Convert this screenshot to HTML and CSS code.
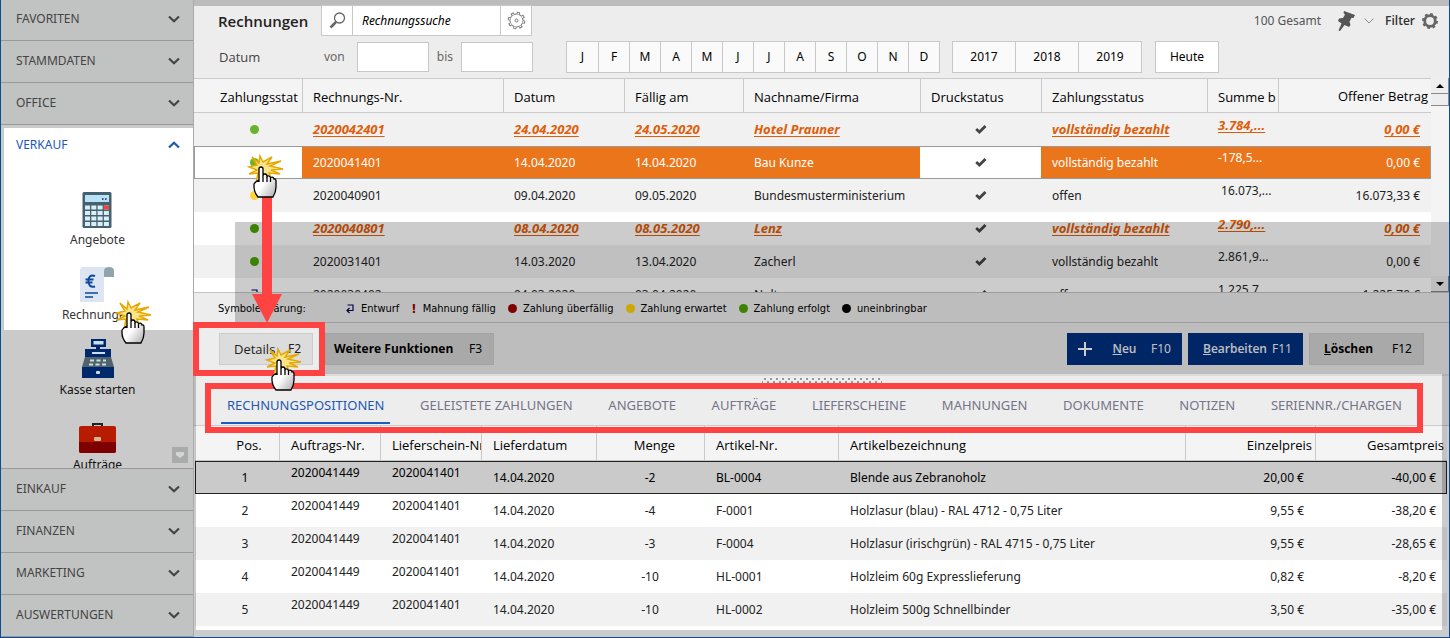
FILE: index.html
```html
<!DOCTYPE html>
<html lang="de">
<head>
<meta charset="utf-8">
<title>Rechnungen</title>
<link rel="stylesheet" href="styles.css">
</head>
<body>
<svg class="defs" width="0" height="0" aria-hidden="true">
  <defs>
    <linearGradient id="skin" x1="0" y1="0" x2="1" y2="1"><stop offset=".5" stop-color="#fff"/><stop offset="1" stop-color="#aaa"/></linearGradient>
    <symbol id="down" viewBox="0 0 12 8"><path d="M1 1.500l5 4.700 5-4.700" fill="none" stroke="currentColor" stroke-width="2.200"/></symbol>
    <symbol id="up" viewBox="0 0 12 8"><path d="M1 6.500l5-4.700 5 4.700" fill="none" stroke="currentColor" stroke-width="2.200"/></symbol>
    <symbol id="check" viewBox="0 0 12 10"><path d="M1.200 5l3.200 3L10.500 2" fill="none" stroke="currentColor" stroke-width="2.800"/></symbol>
    <symbol id="entwurf" viewBox="0 0 10 10"><path d="M2.500 1h5.500v5.500H2M4.500 4L2 6.500 4.500 9" fill="none" stroke="#000060" stroke-width="1.200"/></symbol>
    <symbol id="click" viewBox="0 0 60 60">
      <path d="M12 12l7 6 1-7 3 6 9-5-5 7 14-3-11 5 13 3-12 1 9 4-11-1 3 8-7-7-9 9 2-10-9 1 8-4-8-3 8-2z" fill="#fbe48a" stroke="#e5a900" stroke-width="1.500"/>
      <path d="M19 37V24q0-2 2-2t2 2v7q0-2 2-2t2 2.500q2-1.500 3.500 1 3-1 3.500 1.500 2-.5 2 2V42q0 5-3 10H18q-4-5-4-10v-3q2-3 5-4z" fill="url(#skin)" stroke="#000" stroke-width="1.300"/>
      <path d="M23 31v6M27 32v5M30.500 33v4" stroke="#000" stroke-width="1.300"/>
    </symbol>
  </defs>
</svg>
<nav class="sidebar">
  <button class="nav">FAVORITEN<svg><use href="#down"/></svg></button>
  <button class="nav">STAMMDATEN<svg><use href="#down"/></svg></button>
  <button class="nav">OFFICE<svg><use href="#down"/></svg></button>
  <section class="group">
    <div class="lit">
      <button class="nav open">VERKAUF<svg><use href="#up"/></svg></button>
      <a class="tile" href="#">
        <svg width="30" height="36" viewBox="0 0 30 36"><rect x=".5" width="29" height="36" rx="1.500" fill="#45606e"/><rect x="3" y="3" width="24" height="7" fill="#b9e2f6"/><path d="M20 7h1.500M23 7h1.500" stroke="#222" stroke-width="1.500"/><path d="M3 15.500h24M3 21h24M3 26.500h24M3 32h24" stroke="#d8effa" stroke-width="4" stroke-dasharray="5 1.300"/><rect x="22" y="13.500" width="5" height="4" fill="#f44336"/></svg>
        <span>Angebote</span></a>
      <a class="tile" href="#">
        <svg width="34" height="36" viewBox="0 0 34 36"><path d="M0 3q0-3 3-3h24q-3 1-3 5v30H0z" fill="#dde4f2"/><path d="M24 10V4q0-4 5-4t5 4v6z" fill="#90a4ae"/><path d="M15 9q-6.500-2-6.500 5t6.500 5.500M5.500 12.500h8M5.500 15.500h7" fill="none" stroke="#0a4a9c" stroke-width="2"/><path d="M5 26h13M5 30h8" stroke="#0a4a9c" stroke-width="1.600"/></svg>
        <span>Rechnungen</span></a>
    </div>
    <div class="dimmed">
      <a class="tile" href="#">
        <svg width="32" height="39" viewBox="0 0 32 39"><rect x="9" width="15" height="8" fill="#00286c"/><rect x="11.500" y="2" width="10" height="3.500" fill="#cde"/><path d="M14 8h4v3h-4z" fill="#00286c"/><path d="M3 10h26v8H3z" fill="#00286c"/><path d="M10 14h13" stroke="#cde" stroke-width="2"/><path d="M3 18h26l3 10H0z" fill="#50626b"/><path d="M8 21.500h16M7 25.500h18" stroke="#cdd" stroke-width="2.200" stroke-dasharray="4 2.500"/><rect y="28" width="32" height="11" fill="#00286c"/><rect x="14" y="32" width="4" height="3" rx="1" fill="#cdd"/></svg>
        <span>Kasse starten</span></a>
      <a class="tile" href="#">
        <svg width="37" height="30" viewBox="0 0 37 30"><path d="M14 4V1h9v3" fill="none" stroke="#222" stroke-width="2"/><rect y="3" width="37" height="27" rx="2" fill="#b71c00"/><path d="M0 19h37v9q0 2-2 2H2q-2 0-2-2z" fill="#7f0000"/><rect x="15" y="14" width="7" height="4" rx="1" fill="#cbb898"/></svg>
        <span>Aufträge</span></a>
    </div>
    <button class="more" aria-label="Mehr"><svg width="8" height="6" viewBox="0 0 8 6"><path d="M0 0h8v3L4 6 0 3z" fill="#d4d4d4"/></svg></button>
  </section>
  <button class="nav">EINKAUF<svg><use href="#down"/></svg></button>
  <button class="nav">FINANZEN<svg><use href="#down"/></svg></button>
  <button class="nav">MARKETING<svg><use href="#down"/></svg></button>
  <button class="nav">AUSWERTUNGEN<svg><use href="#down"/></svg></button>
</nav>
<main class="main">
  <header class="head">
    <h1>Rechnungen</h1>
    <div class="search">
      <button aria-label="Suchen"><svg width="17" height="17" viewBox="0 0 17 17" fill="none" stroke="#666"><circle cx="10.500" cy="6" r="5" stroke-width="1.300"/><path d="M7 10l-5.500 5.500" stroke-width="2.500"/></svg></button>
      <input type="text" value="Rechnungssuche" aria-label="Rechnungssuche">
      <button aria-label="Sucheinstellungen"><svg width="19" height="19" viewBox="0 0 19 19"><circle cx="9.500" cy="9.500" r="7" fill="#777"/><circle cx="9.500" cy="9.500" r="7.700" fill="none" stroke="#777" stroke-width="2.200" stroke-dasharray="3.200 2.850"/><circle cx="9.500" cy="9.500" r="7" fill="none" stroke="#fff" stroke-width="1.600" stroke-dasharray="1.500 3.998" stroke-dashoffset="-.750"/><circle cx="9.500" cy="9.500" r="6" fill="#fff"/><circle cx="9.500" cy="9.500" r="1.500" fill="none" stroke="#777"/></svg></button>
    </div>
    <div class="tools">
      <span class="total">100 Gesamt</span>
      <svg width="17" height="20" viewBox="0 0 17 20"><path d="M6 0l11 4-1.500 3-2-.3-2 4 1 3.300-1.500 2-4.500-2L2 20l-1.500-.5 3-7L0 10l1-2.500 4-.5 2-3.500-1.500-1.500z" fill="#555"/></svg>
      <svg class="thin" width="10" height="6" viewBox="0 0 10 6"><path d="M.5.5L5 5 9.500.5" fill="none" stroke="#888"/></svg>
      <button class="filter">Filter<svg width="16" height="16" viewBox="0 0 16 16" fill="none" stroke="#666"><circle cx="8" cy="8" r="5.300" stroke-width="2.800"/><circle cx="8" cy="8" r="7" stroke-width="2" stroke-dasharray="2.750 2.750"/></svg></button>
    </div>
  </header>
  <div class="dates">
    <span class="cap">Datum</span>
    <label>von<input type="text"></label>
    <label>bis<input type="text"></label>
    <div class="seg months"><button>J</button><button>F</button><button>M</button><button>A</button><button>M</button><button>J</button><button>J</button><button>A</button><button>S</button><button>O</button><button>N</button><button>D</button></div>
    <div class="seg years"><button>2017</button><button>2018</button><button>2019</button></div>
    <div class="seg today"><button>Heute</button></div>
  </div>
  <div class="invoices">
    <table>
      <colgroup><col class="w108"><col class="w201"><col class="w121"><col class="w119"><col><col class="w121"><col class="w166"><col class="w72"><col class="w152"></colgroup>
      <thead><tr><th class="stat">Zahlungsstat</th><th>Rechnungs-Nr.</th><th>Datum</th><th>Fällig am</th><th>Nachname/Firma</th><th>Druckstatus</th><th>Zahlungsstatus</th><th class="cut">Summe b</th><th class="r">Offener Betrag</th></tr></thead>
      <tbody>
        <tr class="paid"><td class="stat"><i class="dot lime"></i></td><td><a href="#">2020042401</a></td><td><a href="#">24.04.2020</a></td><td><a href="#">24.05.2020</a></td><td><a href="#">Hotel Prauner</a></td><td class="c"><svg class="ck"><use href="#check"/></svg></td><td><a href="#">vollständig bezahlt</a></td><td class="raised"><a href="#">3.784,...</a></td><td class="r"><a href="#">0,00 €</a></td></tr>
        <tr class="sel"><td class="stat"><i class="dot lime"></i></td><td>2020041401</td><td>14.04.2020</td><td>14.04.2020</td><td>Bau Kunze</td><td class="c"><svg class="ck"><use href="#check"/></svg></td><td>vollständig bezahlt</td><td class="raised">-178,5...</td><td class="r">0,00 €</td></tr>
        <tr><td class="stat"><i class="dot yellow"></i></td><td>2020040901</td><td>09.04.2020</td><td>09.05.2020</td><td>Bundesmusterministerium</td><td class="c"><svg class="ck"><use href="#check"/></svg></td><td>offen</td><td class="raised">&nbsp;16.073,...</td><td class="r">16.073,33 €</td></tr>
        <tr class="paid"><td class="stat"><i class="dot green"></i></td><td><a href="#">2020040801</a></td><td><a href="#">08.04.2020</a></td><td><a href="#">08.05.2020</a></td><td><a href="#">Lenz</a></td><td class="c"><svg class="ck"><use href="#check"/></svg></td><td><a href="#">vollständig bezahlt</a></td><td class="raised"><a href="#">2.790,...</a></td><td class="r"><a href="#">0,00 €</a></td></tr>
        <tr><td class="stat"><i class="dot green"></i></td><td>2020031401</td><td>14.03.2020</td><td>13.04.2020</td><td>Zacherl</td><td class="c"><svg class="ck"><use href="#check"/></svg></td><td>vollständig bezahlt</td><td class="raised">2.861,9...</td><td class="r">0,00 €</td></tr>
        <tr><td class="stat"><svg width="10" height="10"><use href="#entwurf"/></svg></td><td>2020030402</td><td>04.03.2020</td><td>03.04.2020</td><td>Nolte</td><td class="c"><svg class="ck"><use href="#check"/></svg></td><td>offen</td><td class="raised">1.225,7...</td><td class="r">1.225,70 €</td></tr>
      </tbody>
    </table>
    <div class="scroll"><button aria-label="Nach oben"><svg width="8" height="4" viewBox="0 0 8 4"><path d="M0 4l4-4 4 4z"/></svg></button><div class="thumb"></div><div class="track"></div><button aria-label="Nach unten"><svg width="8" height="4" viewBox="0 0 8 4"><path d="M0 0l4 4 4-4z"/></svg></button></div>
  </div>
  <div class="legend">
    <span class="lead">Symbolerklärung:</span>
    <span><svg width="10" height="10"><use href="#entwurf"/></svg>Entwurf</span>
    <span><b class="bang">!</b>Mahnung fällig</span>
    <span><i class="dot red"></i>Zahlung überfällig</span>
    <span><i class="dot amber"></i>Zahlung erwartet</span>
    <span><i class="dot forest"></i>Zahlung erfolgt</span>
    <span><i class="dot black"></i>uneinbringbar</span>
  </div>
  <div class="actions">
    <div class="highlight"><button class="btn">Details<kbd>F2</kbd></button></div>
    <button class="btn wide">Weitere Funktionen<kbd>F3</kbd></button>
    <div class="right">
      <button class="btn blue"><svg width="14" height="14" viewBox="0 0 14 14"><path d="M7 0v14M0 7h14" stroke="#fff" stroke-width="2"/></svg><span><u>N</u>eu</span><kbd>F10</kbd></button>
      <button class="btn blue"><span><u>B</u>earbeiten</span><kbd>F11</kbd></button>
      <button class="btn strong"><span><u>L</u>öschen</span><kbd>F12</kbd></button>
    </div>
  </div>
  <section class="detail">
    <div class="grip"></div>
    <div class="tabs" role="tablist">
      <button role="tab" class="on" aria-selected="true">RECHNUNGSPOSITIONEN</button><button role="tab">GELEISTETE ZAHLUNGEN</button><button role="tab">ANGEBOTE</button><button role="tab">AUFTRÄGE</button><button role="tab">LIEFERSCHEINE</button><button role="tab">MAHNUNGEN</button><button role="tab">DOKUMENTE</button><button role="tab">NOTIZEN</button><button role="tab">SERIENNR./CHARGEN</button>
      <div class="frame"></div>
    </div>
    <div class="sheet">
    <table class="positions">
      <colgroup><col class="w84"><col class="w101"><col class="w101"><col class="w115"><col class="w108"><col class="w134"><col><col class="w130"><col class="w132"></colgroup>
      <thead><tr><th class="pos">Pos.</th><th>Auftrags-Nr.</th><th class="cut">Lieferschein-Nr.</th><th>Lieferdatum</th><th class="c">Menge</th><th>Artikel-Nr.</th><th>Artikelbezeichnung</th><th class="r">Einzelpreis</th><th class="r">Gesamtpreis</th></tr></thead>
      <tbody>
        <tr class="cur"><td class="pos">1</td><td class="raised">2020041449</td><td class="raised">2020041401</td><td>14.04.2020</td><td class="c">-2</td><td>BL-0004</td><td>Blende aus Zebranoholz</td><td class="r">20,00 €</td><td class="r">-40,00 €</td></tr>
        <tr><td class="pos">2</td><td class="raised">2020041449</td><td class="raised">2020041401</td><td>14.04.2020</td><td class="c">-4</td><td>F-0001</td><td>Holzlasur (blau) - RAL 4712 - 0,75 Liter</td><td class="r">9,55 €</td><td class="r">-38,20 €</td></tr>
        <tr><td class="pos">3</td><td class="raised">2020041449</td><td class="raised">2020041401</td><td>14.04.2020</td><td class="c">-3</td><td>F-0004</td><td>Holzlasur (irischgrün) - RAL 4715 - 0,75 Liter</td><td class="r">9,55 €</td><td class="r">-28,65 €</td></tr>
        <tr><td class="pos">4</td><td class="raised">2020041449</td><td class="raised">2020041401</td><td>14.04.2020</td><td class="c">-10</td><td>HL-0001</td><td>Holzleim 60g Expresslieferung</td><td class="r">0,82 €</td><td class="r">-8,20 €</td></tr>
        <tr><td class="pos">5</td><td class="raised">2020041449</td><td class="raised">2020041401</td><td>14.04.2020</td><td class="c">-10</td><td>HL-0002</td><td>Holzleim 500g Schnellbinder</td><td class="r">3,50 €</td><td class="r">-35,00 €</td></tr>
      </tbody>
    </table>
    </div>
    <div class="edge"></div>
  </section>
  <div class="shade"></div>
</main>
<svg class="arrow" width="30" height="136" viewBox="0 0 30 136"><path d="M10 0h10v107h10L15 136 0 107h10z" fill="#ff4343"/></svg>
<svg class="cursor c1"><use href="#click"/></svg>
<svg class="cursor c2"><use href="#click"/></svg>
<svg class="cursor c3"><use href="#click"/></svg>
</body>
</html>
```
FILE: styles.css
```css
* { box-sizing: border-box; }
body {
  margin: 0; height: 100vh; display: flex; position: relative; overflow: hidden;
  border: solid #0a4c96; border-width: 0 1px 1px;
  background: #ededed; color: #222;
  font: 12px/16px "Noto Sans", "Open Sans", sans-serif;
}
button, input { font: inherit; color: inherit; margin: 0; padding: 0; border: 0; border-radius: 0; background: none; }
a { color: inherit; text-decoration: none; }
.defs { position: absolute; }

.sidebar { width: 193px; flex: none; display: flex; flex-direction: column; background: #c1c3c2; border-right: 1px solid #aaa; }
.nav { flex: none; height: 42px; padding: 0 13px 2px 15px; display: flex; align-items: center; justify-content: space-between; border-bottom: 1px solid #999; color: #444; text-align: left; }
.nav:first-child { height: 41px; }
.nav svg { width: 12px; height: 8px; }
.group { flex: 1 1 0; min-height: 0; overflow: hidden; position: relative; padding: 3px 0 0 3px; background: #cacaca; border-bottom: 1px solid #999; }
.lit { background: #fff; padding-bottom: 7px; display: flex; flex-direction: column; align-items: center; gap: 19px; }
.lit .nav { width: 100%; height: 45px; padding: 0 13px 12px 12px; border: 0; color: #1d58b4; }
.tile { display: flex; flex-direction: column; align-items: center; gap: 4px; color: #333; padding-right: 2px; }
.dimmed { display: flex; flex-direction: column; align-items: center; gap: 25px; padding-top: 9px; }
.dimmed .tile { color: #111; }
.more { position: absolute; right: 5px; bottom: 5px; width: 16px; height: 16px; background: #a9abab; display: grid; place-items: center; }

.main { flex: 1; min-width: 0; display: flex; flex-direction: column; position: relative; border-top: 6px solid #bcbcbc; }
.head { height: 29px; flex: none; display: flex; align-items: center; padding: 0 11px 0 24px; }
h1 { margin: 0; width: 103px; font: 600 15px/20px "Open Sans", sans-serif; }
.search { display: flex; height: 31px; border: 1px solid #c8c8c8; background: #fff; }
.search button { width: 30px; display: grid; place-items: center; }
.search input { width: 149px; padding: 0 9px; border: solid #c8c8c8; border-width: 0 1px; font-style: italic; color: #000; }
.tools { margin-left: auto; display: flex; align-items: center; color: #333; }
.total { margin-right: 17px; color: #555; }
.thin { margin: 0 11px 0 9px; }
.filter { display: flex; align-items: center; gap: 7px; font: 600 12px/16px "Open Sans", sans-serif; }
.dates { flex: none; height: 43px; display: flex; align-items: center; padding: 0 0 0 25px; color: #444; }
.cap { width: 105px; font: 13px/16px "Open Sans", sans-serif; }
.dates label { display: flex; align-items: center; justify-content: flex-end; gap: 8px; width: 104px; color: #666; }
.dates label:first-of-type { justify-content: flex-start; gap: 12px; width: 105px; }
.dates input { width: 72px; height: 30px; border: 1px solid #c8c8c8; background: #fff; }
.seg { display: flex; height: 32px; border: 1px solid #c8c8c8; background: #fafafa; color: #000; }
.seg button + button { border-left: 1px solid #c8c8c8; }
.months { margin-left: 33px; }
.months button { width: 31px; }
.years { margin-left: 12px; }
.years button { width: 63px; }
.years button:first-child { width: 62px; }
.today { margin-left: 13px; background: #fff; }
.today button { width: 62px; }

table { border-spacing: 0; table-layout: fixed; width: 100%; }
th, td { padding: 0 0 0 11px; white-space: nowrap; text-align: left; overflow: hidden; font-weight: 400; }
th { height: 35px; padding: 2px 0 0 10px; font: 13px/16px "Open Sans", sans-serif; color: #000; background: #f4f4f4; border: solid #cacaca; border-width: 1px 0 1px 1px; }
th:first-child { border-left: 0; }
td { height: 33px; background: #fff; }
.r { text-align: right; padding: 0 11px 0 0; }
th.r { padding-right: 3px; }
.c { text-align: center; padding: 0; }
td.raised { vertical-align: top; padding-top: 4px; }
.w72 { width: 72px; } .w84 { width: 84px; } .w101 { width: 101px; } .w108 { width: 108px; }
.w115 { width: 115px; } .w119 { width: 119px; } .w121 { width: 121px; } .w130 { width: 130px; }
.w132 { width: 132px; } .w134 { width: 134px; } .w152 { width: 152px; } .w166 { width: 166px; } .w201 { width: 201px; }

.invoices { flex: none; max-height: 215px; overflow: hidden; display: flex; align-items: flex-start; position: relative; border-bottom: 1px solid #c4c4c4; }
.invoices tr:nth-child(odd) td { background: #f1f1f1; }
.invoices td.stat { text-align: center; padding-left: 12px; }
.invoices th.stat { padding-left: 26px; }
.invoices .cut { border-right: 1px solid #cacaca; }
.invoices th.r { border-left: 0; }
.paid a { color: #e05d08; font-weight: 700; font-size: 13px; font-style: italic; text-decoration: underline; text-underline-offset: 2px; }
.sel { outline: 1px solid #999; outline-offset: -1px; color: #fff; }
.sel td { background: #eb751b; }
.sel .stat, .sel .c { background: #fff; }
.ck { width: 12px; height: 10px; color: #444; }
.dot { display: inline-block; width: 9px; height: 9px; border-radius: 50%; }
.lime { background: #69b42c; } .yellow { background: #ffd23c; } .green { background: #4aa400; }
.red { background: #a00000; } .amber { background: #ffd200; } .forest { background: #4aa400; } .black { background: #000; }
.scroll { width: 18px; align-self: stretch; flex: none; display: flex; flex-direction: column; background: #f4f4f4; }
.scroll button, .thumb { height: 16px; flex: none; display: grid; place-items: center; background: #eee; border: solid #888; border-width: 0 1px 1px 0; }
.thumb { height: 12px; }
.track { flex: 1; }

.legend { flex: none; height: 30px; display: flex; align-items: center; gap: 12px; padding: 2px 0 0 24px; border-bottom: 1px solid #c4c4c4; color: #000; font: 11px/14px "DejaVu Sans Condensed", "DejaVu Sans", sans-serif; }
.legend span { display: flex; align-items: center; gap: 6px; }
.legend .lead { width: 115px; }
.bang { color: #a00000; font-size: 13px; }

.actions { flex: none; height: 51px; display: flex; align-items: center; }
.highlight { position: relative; z-index: 3; margin: 0 0 0 -1px; padding: 5px 6px 5px 20px; border: 6px solid #ff4343; background: #ededed; }
.btn { height: 32px; display: flex; align-items: center; justify-content: space-between; padding: 0 11px 0 14px; border: 1px solid #ccc; background: #dcdcdc; color: #222; font: 600 12px/16px "Open Sans", sans-serif; }
.highlight .btn { width: 94px; font: 13px/16px "Open Sans", sans-serif; }
.btn.wide { width: 169px; padding-left: 8px; background: #d4d4d4; color: #000; font-weight: 700; }
.btn.strong { background: #d4d4d4; color: #000; font-weight: 700; }
kbd { font: 12px/16px "Noto Sans", "Open Sans", sans-serif; }
.right { margin-left: auto; display: flex; gap: 6px; padding-right: 25px; }
.right .btn { width: 115px; }
.btn.blue { background: #003080; border-color: #003080; color: #f0f0f0; padding-left: 14px; padding-right: 10px; }
.btn.blue svg + span { margin-left: 6px; }
.btn.blue svg { margin-left: -4px; }

.detail { flex: 1; min-height: 0; position: relative; background: #fff; }
.grip { height: 10px; background: #ededed; display: flex; align-items: center; justify-content: center; border-top: 2px solid #dcdcdc; }
.grip::before { content: ""; width: 120px; height: 6px; background-image: radial-gradient(#999 1px, transparent 1px), radial-gradient(#999 1px, transparent 1px); background-size: 6px 6px; background-position: 0 -1px, 3px 2px; }
.tabs { height: 42px; display: flex; justify-content: space-between; position: relative; padding: 0 41px 1px 27px; background: #ededed; border-bottom: 1px solid #ccc; }
.tabs button { padding: 3px 6px 0; border-bottom: 2px solid transparent; color: #747488; font: 13px/16px "Noto Sans", "Open Sans", sans-serif; }
.tabs .on { color: #1d58b4; border-color: #1d5cc0; }
.frame { position: absolute; z-index: 3; inset: -1px 26px -8px 11px; border: 6px solid #ff4343; pointer-events: none; }
.sheet { padding: 0 2px 0 1px; }
.positions th { border-top: 0; padding-top: 3px; }
.positions tr:nth-child(odd) td { background: #f1f1f1; }
.positions tr.cur td { background: #cacaca; color: #000; }
.cur { outline: 1px solid #222; outline-offset: -1px; }
.positions th, .positions td { padding-left: 12px; }
.positions th { padding-left: 11px; }
.positions td.c { padding-left: 0; }
.positions td.pos { padding-left: 16px; }
.positions .pos { text-align: center; }
.positions th.pos { padding-left: 24px; }
.positions th.c { padding-left: 8px; }
.edge { position: absolute; inset: 0; border: solid rgba(0, 0, 0, .2); border-width: 0 7px 7px 2px; pointer-events: none; }
.shade { position: absolute; z-index: 2; top: 216px; left: 41px; right: 0; height: 152px; background: rgba(0, 0, 0, .2); pointer-events: none; }

.arrow { position: absolute; z-index: 4; left: 251px; top: 187px; }
.cursor { position: absolute; z-index: 5; width: 60px; height: 60px; }
.c1 { left: 239px; top: 145px; }
.c2 { left: 107px; top: 291px; }
.c3 { left: 257px; top: 338px; }
```
